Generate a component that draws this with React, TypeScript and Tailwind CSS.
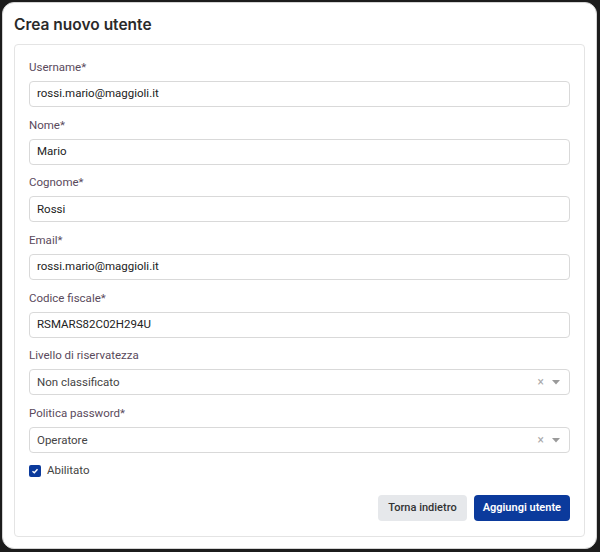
import React, { useState } from 'react';

const fields = [
  { label: 'Username*', value: 'rossi.mario@maggioli.it' },
  { label: 'Nome*', value: 'Mario' },
  { label: 'Cognome*', value: 'Rossi' },
  { label: 'Email*', value: 'rossi.mario@maggioli.it' },
  { label: 'Codice fiscale*', value: 'RSMARS82C02H294U' },
];

const selects = [
  { label: 'Livello di riservatezza', value: 'Non classificato' },
  { label: 'Politica password*', value: 'Operatore' },
];

function SelectBox({ value }: { value: string }) {
  return (
    <div className="flex items-center h-[26px] rounded-[4px] border border-[#d9d9d9] bg-white pl-[7px] pr-[9px]">
      <span className="flex-1 text-[11.5px] text-[#444]">{value}</span>
      <span className="text-[12px] leading-none text-[#aaa] mr-[8px]">×</span>
      <svg width="8" height="5" viewBox="0 0 8 5">
        <path d="M0 0 L8 0 L4 4.5 Z" fill="#9a9a9a" />
      </svg>
    </div>
  );
}

export default function App() {
  const [enabled, setEnabled] = useState(true);

  return (
    <div
      className="h-[552px] w-[600px] bg-[#1c1c1c] pt-[2px] pl-[2px] pr-[3px] pb-[3px]"
      style={{ fontFamily: 'Roboto, "Noto Sans", sans-serif' }}
    >
      <div className="h-full rounded-[12px] border border-[#d4d4d4] bg-white px-[11px] pt-[10px] pb-[11px] flex flex-col">
        <h1
          className="text-[15.5px] leading-[24px] font-semibold text-[#2a2a2a] mb-[7px]"
          style={{ fontFamily: 'Inter, Roboto, sans-serif' }}
        >
          Crea nuovo utente
        </h1>

        <div className="flex-1 rounded-[4px] border border-[#e4e4e4] px-[14px] pt-[15px] pb-[15px] flex flex-col">
          <div className="flex flex-col gap-[10.7px]">
            {fields.map((f) => (
              <div key={f.label}>
                <div className="text-[11.5px] leading-[14px] text-[#5a4a5c] mb-[7px]">{f.label}</div>
                <div className="flex items-center h-[26px] rounded-[4px] border border-[#d9d9d9] bg-white px-[7px] text-[11.5px] text-[#222]">
                  {f.value}
                </div>
              </div>
            ))}
            {selects.map((s) => (
              <div key={s.label}>
                <div className="text-[11.5px] leading-[14px] text-[#5a4a5c] mb-[7px]">{s.label}</div>
                <SelectBox value={s.value} />
              </div>
            ))}
          </div>

          <label className="flex items-center gap-[6px] mt-[9px] cursor-pointer">
            <span
              onClick={() => setEnabled(!enabled)}
              className="flex items-center justify-center w-[12px] h-[12px] rounded-[2px] bg-[#0b3a9c]"
            >
              {enabled && (
                <svg width="8" height="8" viewBox="0 0 8 8">
                  <path d="M1.5 4.2 L3.3 5.8 L6.5 2.2" stroke="white" strokeWidth="1.4" fill="none" />
                </svg>
              )}
            </span>
            <span className="text-[11.5px] text-[#444]">Abilitato</span>
          </label>

          <div className="mt-auto flex justify-end gap-[7px]">
            <button className="h-[26px] px-[10px] rounded-[4px] bg-[#e6e8eb] text-[11px] font-medium text-[#333]">
              Torna indietro
            </button>
            <button className="h-[26px] px-[9px] rounded-[4px] bg-[#0b3a9c] text-[11px] font-semibold text-white">
              Aggiungi utente
            </button>
          </div>
        </div>
      </div>
    </div>
  );
}
